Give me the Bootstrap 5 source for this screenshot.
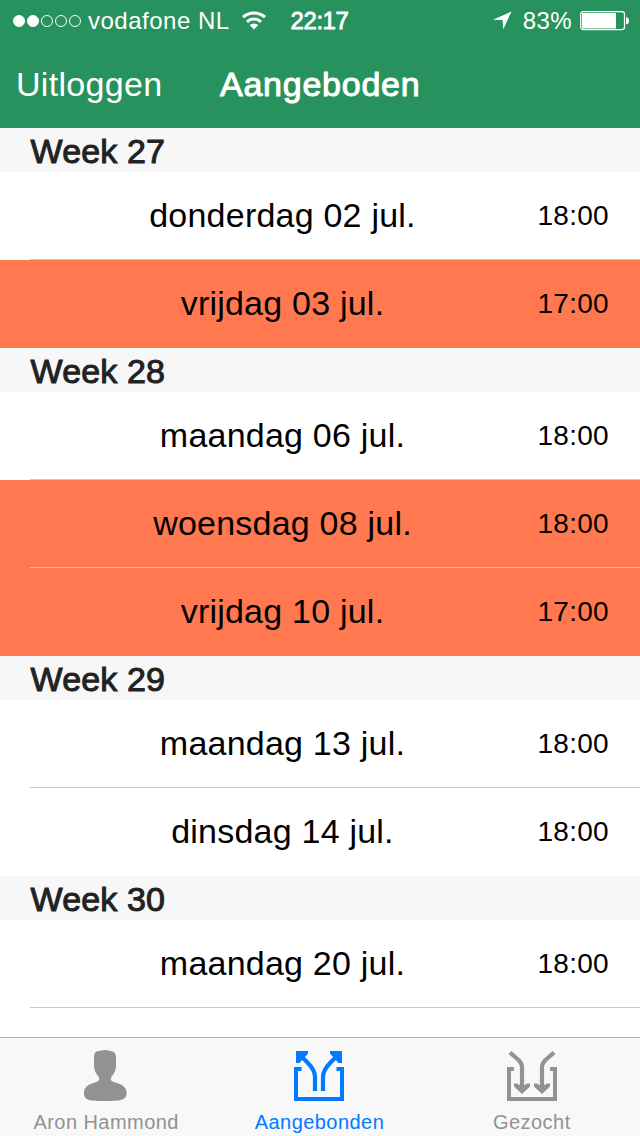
<!DOCTYPE html>
<html lang="nl">
<head>
<meta charset="utf-8">
<meta name="viewport" content="width=device-width, initial-scale=1">
<title>Aangeboden</title>
<link href="https://cdn.jsdelivr.net/npm/bootstrap@5.3.0/dist/css/bootstrap.min.css" rel="stylesheet">
<style>
body{font-family:"Liberation Sans",Arial,sans-serif;color:#000;height:1136px;line-height:1}
.top-area{background:#27925d;height:128px}
.status-line{height:40px;font-size:24px;padding:1px 11px 0 13px}
.dot{width:12px;height:12px;border:1px solid #fff;border-radius:50%;margin-right:2px}
.dot.on{background:#fff}
.carrier{letter-spacing:.5px;margin-left:5px;padding-top:1px}
.wifi{margin-left:7px}
.clock{-webkit-text-stroke:.8px #fff;letter-spacing:-.45px;margin-left:20px;padding-top:1px}
.percent{margin-left:11px;letter-spacing:.4px;padding-top:1px}
.battery{margin-left:8px}
.title-line{height:88px;font-size:34px}
.logout{letter-spacing:.3px;margin-left:16px;width:204px}
.heading{-webkit-text-stroke:1px #fff;letter-spacing:.75px}
.week{height:44px;background:#f7f7f7;color:#222;font-size:34px;-webkit-text-stroke:1px #222;letter-spacing:.15px;padding:2px 0 0 30.5px}
.slot{height:88px;padding-bottom:1px}
.slot .day{width:565px;flex:none;font-size:34px;letter-spacing:.22px;padding-bottom:2px}
.slot .hour{font-size:28px;letter-spacing:.3px;flex:none;width:75px;padding-right:31px;display:flex;justify-content:flex-end}
.slot.taken{background:#ff7850}
.slot.ruled{background-image:linear-gradient(#c8c7cc,#c8c7cc);background-size:calc(100% - 30px) 1px;background-position:30px 100%;background-repeat:no-repeat}
.slot.taken.ruled{background-image:linear-gradient(#d8c3bf,#d8c3bf)}
.tabs{height:99px;background:#f8f8f8;border-top:1px solid #b0b0b0;font-size:20px;color:#929292;padding-right:2px}
.tabs a{color:inherit;letter-spacing:.45px;padding-top:11px}
.tabs a:first-child{padding-right:1px}
.tabs a.current{color:#007aff}
.tabs svg{display:block;margin-bottom:9px}
</style>
</head>
<body class="d-flex flex-column overflow-hidden bg-white">
<header class="top-area text-white flex-shrink-0">
  <div class="status-line d-flex align-items-center">
    <span class="dot on"></span><span class="dot on"></span><span class="dot"></span><span class="dot"></span><span class="dot"></span>
    <span class="carrier">vodafone NL</span>
    <svg class="wifi" width="34" height="20" viewBox="-4 0 34 20" fill="none" stroke="#fff" stroke-width="3"><path d="M2 6.200a16.500 16.500 0 0 1 22 0M6 10.800a10.400 10.400 0 0 1 14 0"/><path d="M13 18.500 8.600 14.100a6.600 6.600 0 0 1 8.800 0z" fill="#fff" stroke="none"/></svg>
    <span class="clock">22:17</span>
    <svg class="ms-auto" width="19" height="19" viewBox="0 0 19 19"><path d="M18.500.5 0 8.800l9.600.3.600 9.400z" fill="#fff"/></svg>
    <span class="percent">83%</span>
    <svg class="battery" width="49" height="20" viewBox="0 0 49 20"><rect x=".7" y=".7" width="43.800" height="18" rx="2.600" fill="none" stroke="#fff" stroke-width="1.200"/><path d="M2 2h34v15.400H2zM46 6.200q3 0 3 3.500t-3 3.500z" fill="#fff"/></svg>
  </div>
  <nav class="title-line d-flex align-items-center">
    <span class="logout">Uitloggen</span><span class="heading">Aangeboden</span>
  </nav>
</header>
<main class="flex-grow-1 overflow-hidden">
  <div class="week d-flex align-items-center">Week 27</div>
  <div class="slot ruled d-flex align-items-center"><span class="day text-center">donderdag 02 jul.</span><span class="hour">18:00</span></div>
  <div class="slot taken d-flex align-items-center"><span class="day text-center">vrijdag 03 jul.</span><span class="hour">17:00</span></div>
  <div class="week d-flex align-items-center">Week 28</div>
  <div class="slot ruled d-flex align-items-center"><span class="day text-center">maandag 06 jul.</span><span class="hour">18:00</span></div>
  <div class="slot taken ruled d-flex align-items-center"><span class="day text-center">woensdag 08 jul.</span><span class="hour">18:00</span></div>
  <div class="slot taken d-flex align-items-center"><span class="day text-center">vrijdag 10 jul.</span><span class="hour">17:00</span></div>
  <div class="week d-flex align-items-center">Week 29</div>
  <div class="slot ruled d-flex align-items-center"><span class="day text-center">maandag 13 jul.</span><span class="hour">18:00</span></div>
  <div class="slot d-flex align-items-center"><span class="day text-center">dinsdag 14 jul.</span><span class="hour">18:00</span></div>
  <div class="week d-flex align-items-center">Week 30</div>
  <div class="slot ruled d-flex align-items-center"><span class="day text-center">maandag 20 jul.</span><span class="hour">18:00</span></div>
</main>
<footer class="tabs d-flex flex-shrink-0">
  <a class="col d-flex flex-column align-items-center text-decoration-none" href="#">
    <svg width="52" height="54" viewBox="0 0 52 54"><path d="M25 1c3 0 4.500 1 5.500 1 4 0 5.500 3 5.500 7v7c0 5-1.500 8-4 11-1 1.500-1.500 3-1 4 .5 1.500 3 2 6 3 6 1.500 9.500 5 9.500 9.500 0 7-3 8.500-21.500 8.500S4 50.500 4 43.500c0-4.500 3.500-8 9.500-9.500 3-1 5-1.500 5.500-3 .5-1 0-2.500-1-4-2.500-3-4-6-4-11V8c0-4 2-6 5-6 1 0 3-1 6-1z" fill="currentColor"/></svg>
    Aron Hammond</a>
  <a class="col current d-flex flex-column align-items-center text-decoration-none" href="#">
    <svg width="52" height="54" viewBox="0 0 52 54" fill="none" stroke="currentColor" stroke-width="4"><path d="M8.500 20H3v30h46V20h-5.500"/><path d="M6 5l8 8c4 4 8 9 8 15v14M46 5l-8 8c-4 4-8 9-8 15v14" stroke-width="4.200"/><path d="M3 2h12v2.500L6.500 14H3zM49 2H37v2.500L45.500 14H49z" fill="currentColor" stroke="none"/></svg>
    Aangebonden</a>
  <a class="col d-flex flex-column align-items-center text-decoration-none" href="#">
    <svg width="52" height="54" viewBox="0 0 52 54" fill="none" stroke="currentColor" stroke-width="4"><path d="M8 20H3v30h46V20h-5"/><path d="M4 3.500l9 8q3 3 3 7V40M48 3.500l-9 8q-3 3-3 7V40" stroke-width="4.200"/><path d="M8 34.500h3l5 3 5-3h3v3L16 45l-8-7.500zM28 34.500h3l5 3 5-3h3v3L36 45l-8-7.500z" fill="currentColor" stroke="none"/></svg>
    Gezocht</a>
</footer>
<script src="https://cdn.jsdelivr.net/npm/bootstrap@5.3.0/dist/js/bootstrap.bundle.min.js"></script>
</body>
</html>
